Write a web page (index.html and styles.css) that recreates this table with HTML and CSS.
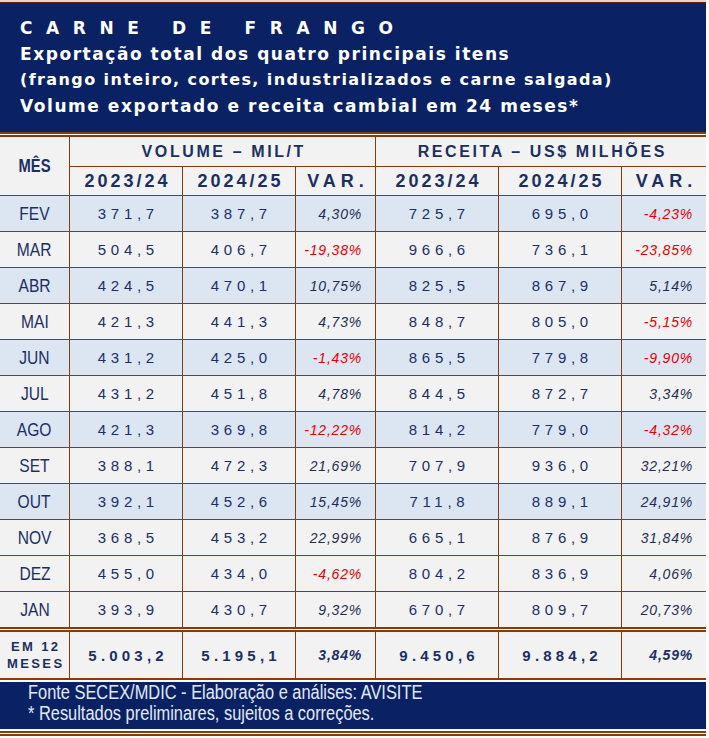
FILE: index.html
```html
<!DOCTYPE html>
<html lang="pt-BR">
<head>
<meta charset="utf-8">
<title>Carne de Frango</title>
<link rel="stylesheet" href="styles.css">
</head>
<body>
<div class="sheet">
  <div class="edge-top"></div>
  <header class="banner">
    <h1 class="title">CARNE DE FRANGO</h1>
    <p class="sub">Exportação total dos quatro principais itens</p>
    <p class="sub fit">(frango inteiro, cortes, industrializados e carne salgada)</p>
    <p class="sub">Volume exportado e receita cambial em 24 meses*</p>
  </header>
  <div class="dbl"></div>
  <div class="grid main">
    <div class="c h mes"><span class="narrow">MÊS</span></div>
    <div class="c h grp">VOLUME – MIL/T</div>
    <div class="c h grp">RECEITA – US$ MILHÕES</div>
    <div class="c h yr">2023/24</div>
    <div class="c h yr">2024/25</div>
    <div class="c h var">VAR.</div>
    <div class="c h yr">2023/24</div>
    <div class="c h yr">2024/25</div>
    <div class="c h var">VAR.</div>

    <div class="row blue"><div class="c m"><span class="narrow">FEV</span></div><div class="c n">371,7</div><div class="c n">387,7</div><div class="c p">4,30%</div><div class="c n">725,7</div><div class="c n">695,0</div><div class="c p neg">-4,23%</div></div>
    <div class="row gray"><div class="c m"><span class="narrow">MAR</span></div><div class="c n">504,5</div><div class="c n">406,7</div><div class="c p neg">-19,38%</div><div class="c n">966,6</div><div class="c n">736,1</div><div class="c p neg">-23,85%</div></div>
    <div class="row blue"><div class="c m"><span class="narrow">ABR</span></div><div class="c n">424,5</div><div class="c n">470,1</div><div class="c p">10,75%</div><div class="c n">825,5</div><div class="c n">867,9</div><div class="c p">5,14%</div></div>
    <div class="row gray"><div class="c m"><span class="narrow">MAI</span></div><div class="c n">421,3</div><div class="c n">441,3</div><div class="c p">4,73%</div><div class="c n">848,7</div><div class="c n">805,0</div><div class="c p neg">-5,15%</div></div>
    <div class="row blue"><div class="c m"><span class="narrow">JUN</span></div><div class="c n">431,2</div><div class="c n">425,0</div><div class="c p neg">-1,43%</div><div class="c n">865,5</div><div class="c n">779,8</div><div class="c p neg">-9,90%</div></div>
    <div class="row gray"><div class="c m"><span class="narrow">JUL</span></div><div class="c n">431,2</div><div class="c n">451,8</div><div class="c p">4,78%</div><div class="c n">844,5</div><div class="c n">872,7</div><div class="c p">3,34%</div></div>
    <div class="row blue"><div class="c m"><span class="narrow">AGO</span></div><div class="c n">421,3</div><div class="c n">369,8</div><div class="c p neg">-12,22%</div><div class="c n">814,2</div><div class="c n">779,0</div><div class="c p neg">-4,32%</div></div>
    <div class="row gray"><div class="c m"><span class="narrow">SET</span></div><div class="c n">388,1</div><div class="c n">472,3</div><div class="c p">21,69%</div><div class="c n">707,9</div><div class="c n">936,0</div><div class="c p">32,21%</div></div>
    <div class="row blue"><div class="c m"><span class="narrow">OUT</span></div><div class="c n">392,1</div><div class="c n">452,6</div><div class="c p">15,45%</div><div class="c n">711,8</div><div class="c n">889,1</div><div class="c p">24,91%</div></div>
    <div class="row gray"><div class="c m"><span class="narrow">NOV</span></div><div class="c n">368,5</div><div class="c n">453,2</div><div class="c p">22,99%</div><div class="c n">665,1</div><div class="c n">876,9</div><div class="c p">31,84%</div></div>
    <div class="row gray"><div class="c m"><span class="narrow">DEZ</span></div><div class="c n">455,0</div><div class="c n">434,0</div><div class="c p neg">-4,62%</div><div class="c n">804,2</div><div class="c n">836,9</div><div class="c p">4,06%</div></div>
    <div class="row gray"><div class="c m"><span class="narrow">JAN</span></div><div class="c n">393,9</div><div class="c n">430,7</div><div class="c p">9,32%</div><div class="c n">670,7</div><div class="c n">809,7</div><div class="c p">20,73%</div></div>
  </div>
  <div class="dbl"></div>
  <div class="grid total">
    <div class="c tl">EM 12<br>MESES</div>
    <div class="c n b">5.003,2</div>
    <div class="c n b">5.195,1</div>
    <div class="c p b">3,84%</div>
    <div class="c n b">9.450,6</div>
    <div class="c n b">9.884,2</div>
    <div class="c p b">4,59%</div>
  </div>
  <div class="rule"></div>
  <footer class="foot">
    <p class="src"><span class="narrow left">Fonte SECEX/MDIC - Elaboração e análises: AVISITE</span></p>
    <p class="src"><span class="narrow left">* Resultados preliminares, sujeitos a correções.</span></p>
  </footer>
  <div class="dbl bottom"></div>
</div>
</body>
</html>
```

FILE: styles.css
```css
* { box-sizing: border-box; }
html, body { margin: 0; padding: 0; background: #ffffff; }
body { font-family: "Liberation Sans", Arial, sans-serif; }

.sheet { width: 706px; }

.narrow { display: inline-block; transform: scaleX(0.82); transform-origin: center; white-space: nowrap; }
.narrow.left { transform-origin: left center; }

.edge-top { height: 3px; border-top: 2px solid #efcfc6; border-bottom: 1px solid #5b2420; }

.banner {
  background: #0a2263;
  color: #ffffff;
  padding: 12px 0 13px 20px;
  height: 129px;
}
.title {
  margin: 0;
  font-family: "DejaVu Sans", sans-serif;
  font-weight: bold;
  font-size: 17px;
  line-height: 26px;
  letter-spacing: 13.6px;
}
.sub {
  margin: 0;
  font-family: "DejaVu Sans", sans-serif;
  font-weight: bold;
  font-size: 17px;
  line-height: 26px;
  letter-spacing: 1.55px;
  white-space: nowrap;
}
.sub.fit { font-size: 16px; letter-spacing: 1.4px; }

.dbl { height: 5px; border-top: 2px solid #843c0c; border-bottom: 2px solid #843c0c; background: #ffffff; }
.dbl.bottom { margin-top: 2px; }
.rule { height: 2px; background: #843c0c; margin-bottom: 2px; }

.grid {
  display: grid;
  grid-template-columns: 69px 112px 112px 79px 122px 122px 84px;
  gap: 1px;
  background: #843c0c;
  color: #1b2f63;
}
.main { grid-template-rows: 29px 28px repeat(12, 35px); }
.total { grid-template-rows: 46px; }
.row { display: contents; }
.c { background: #f2f2f2; display: flex; align-items: center; justify-content: center; white-space: nowrap; }
.row.blue > .c { background: #dce6f2; }

.h { font-weight: bold; }
.mes { grid-row: span 2; font-size: 18px; }
.grp { grid-column: span 3; font-size: 16px; letter-spacing: 2.6px; padding-left: 2.6px; }
.yr { font-size: 18px; letter-spacing: 3px; padding-left: 3px; }
.var { font-size: 18px; letter-spacing: 5px; padding-left: 5px; }

.m { font-size: 19px; }
.n { font-size: 15px; letter-spacing: 4.7px; padding-left: 4.7px; }
.c.p { justify-content: flex-end; font-size: 14px; font-style: italic; letter-spacing: 0.8px; padding-right: 13px; color: #1f2d50; }
.c.p.neg { color: #e00000; }
.n.b { font-weight: bold; letter-spacing: 4.2px; padding-left: 4.2px; }
.c.p.b { font-weight: bold; color: #1b2f63; }
.tl { flex-direction: column; font-size: 13px; font-weight: bold; letter-spacing: 2.4px; line-height: 17px; text-align: center; padding-left: 2.4px; }

.foot {
  background: #0a2263;
  color: #e2eaf7;
  height: 47px;
  padding: 0 0 0 28px;
}
.src { margin: 0; font-size: 20px; line-height: 21px; white-space: nowrap; }
```
